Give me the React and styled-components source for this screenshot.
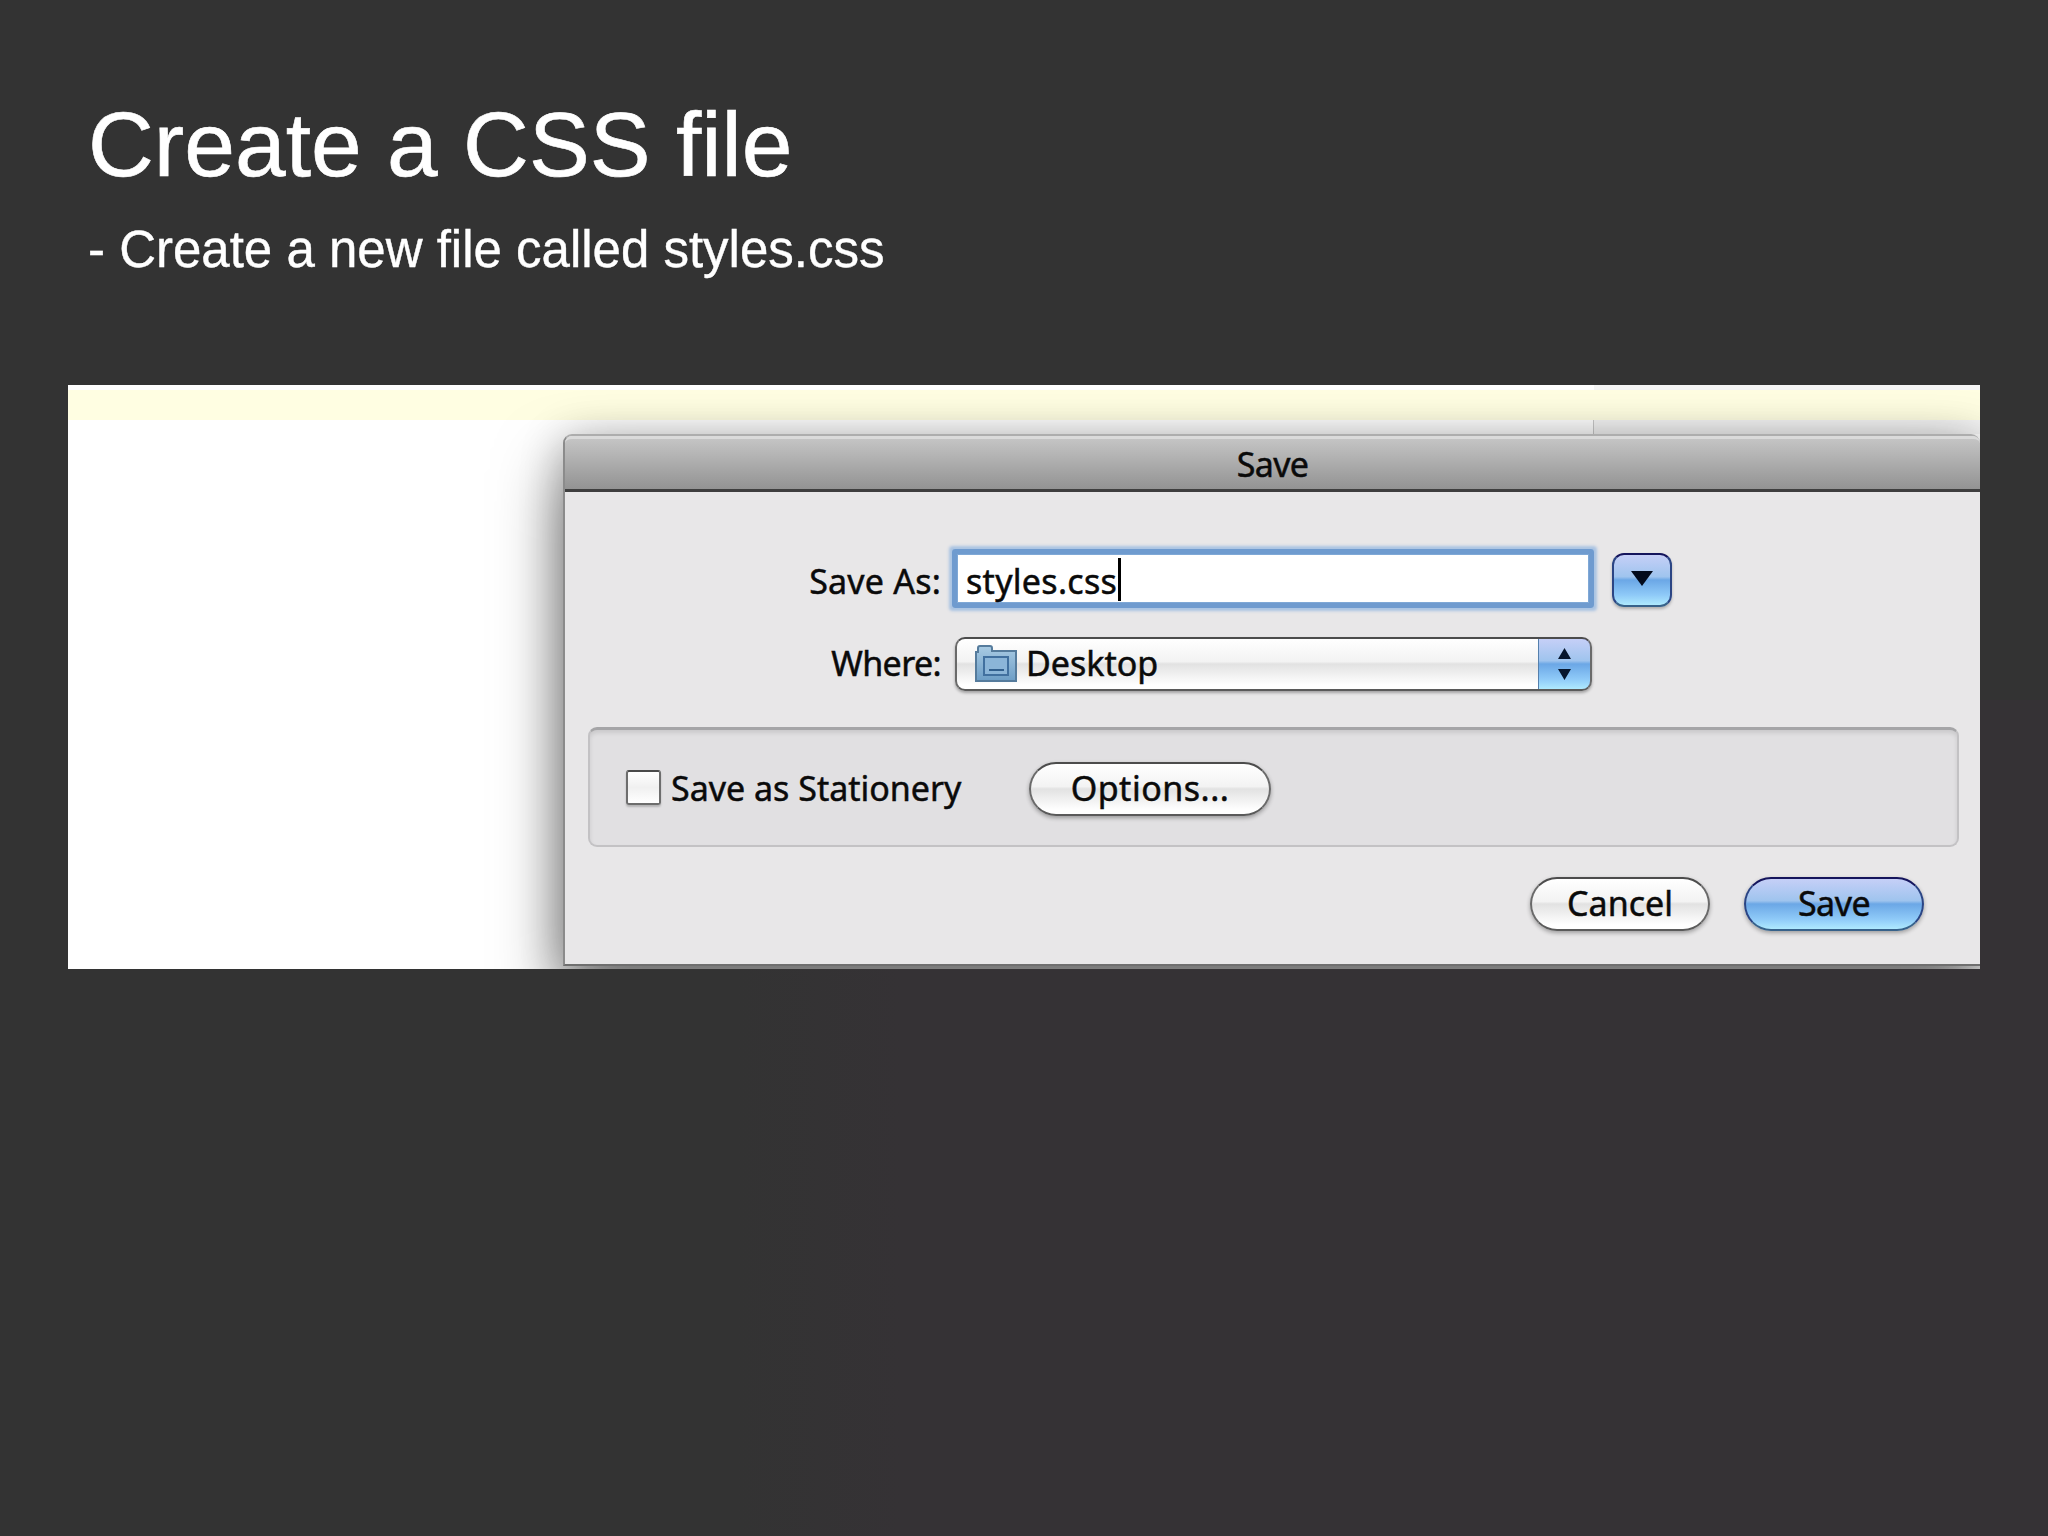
import styled, { createGlobalStyle, css } from 'styled-components'

const GlobalStyle = createGlobalStyle`
	* {
		box-sizing: border-box;
	}

	body {
		margin: 0;
		background: #333333;
	}
`

const Slide = styled.main`
	width: 2048px;
	height: 1536px;
	overflow: hidden;
	padding: 91px 68px 0;
	background:
		linear-gradient(90deg, #333333 36%, #353235 44%) 0 700px / 100% 836px no-repeat,
		#333333;
	color: #ffffff;
	font-family: 'Liberation Sans', Arial, sans-serif;
`

const Title = styled.h1`
	margin: 0;
	padding-left: 20px;
	font-size: 91.2px;
	font-weight: normal;
	line-height: 106px;
	white-space: nowrap;
	-webkit-text-stroke: 0.6px #ffffff;
`

const Subtitle = styled.p`
	margin: 24px 0 0;
	padding-left: 20px;
	font-size: 51px;
	line-height: 58px;
	white-space: nowrap;
	-webkit-text-stroke: 0.4px #ffffff;
`

const Capture = styled.section`
	width: 1912px;
	height: 584px;
	margin-top: 106px;
	padding: 49px 0 0 495px;
	overflow: hidden;
	background:
		linear-gradient(#c9c9c9, #c9c9c9) 1525px 35px / 1px 14px no-repeat,
		linear-gradient(#fffee2, #fffee2) 0 5px / 100% 30px no-repeat,
		linear-gradient(#f5f5f5, #f5f5f5) 1526px 0 / 386px 49px no-repeat,
		#ffffff;
	color: #0a0a0a;
	font-family: 'Noto Sans', 'Open Sans', sans-serif;
	font-size: 34px;
`

const Dialog = styled.div`
	width: 1417px;
	height: 532px;
	border: 2px solid #8b8b8b;
	border-width: 2px 0 2px 2px;
	border-top-color: #adadad;
	border-bottom-color: #6f6f6f;
	border-radius: 9px 9px 0 0;
	background: #e8e7e8;
	box-shadow:
		0 34px 66px rgba(0, 0, 0, 0.52),
		0 4px 44px rgba(0, 0, 0, 0.24);
`

const TitleBar = styled.header`
	display: flex;
	justify-content: center;
	height: 56px;
	border-top: 3px solid #dadada;
	border-bottom: 3px solid #3e3e3e;
	border-radius: 7px 7px 0 0;
	background: linear-gradient(#c4c4c4, #939393);
	line-height: 51px;
`

const Text = styled.span`
	white-space: nowrap;
	letter-spacing: ${({ $spacing }) => $spacing || 0}px;
	-webkit-text-stroke: 0.5px #0a0a0a;
`

const Form = styled.div`
	display: grid;
	grid-template-columns: 390px 637px 60px;
	grid-template-rows: 54px 54px;
	row-gap: 30px;
	padding-top: 61px;
`

const Label = styled.label`
	padding-right: 14px;
	line-height: ${({ $line }) => $line}px;
	text-align: right;
`

const Field = styled.div`
	display: flex;
	align-items: center;
	width: 632px;
	height: 49px;
	margin: 1px 0 0 2px;
	padding-left: 8px;
	border: 1px solid #7fa8d6;
	border-radius: 1px;
	background: #ffffff;
	box-shadow:
		0 0 0 5px #6f9bcf,
		0 0 3px 8px #a9c3e2;

	span {
		padding-top: 5px;
	}
`

const Caret = styled.i`
	width: 3px;
	height: 43px;
	margin: 2px 0 0 1px;
	background: #000000;
`

const white = css`
	border-color: #4c4c4c #6a6a6a #5a5a5a;
	background: linear-gradient(#ffffff, #f3f3f3 45%, #e2e2e2 50%, #ffffff 92%);
`

const blue = css`
	border-color: #15155c #2b4584 #37628a;
	background: linear-gradient(#c9d0f8, #9fc4ee 44%, #6ba7e6 50%, #8fcaf8 78%, #b5f0ff) border-box;
`

const Popup = styled.div`
	display: flex;
	align-items: center;
	height: 54px;
	padding: 0 0 0 18px;
	border: 2px solid;
	border-radius: 10px;
	overflow: hidden;
	box-shadow: 0 2px 3px rgba(0, 0, 0, 0.3);
	${white}

	span {
		padding: 0 0 2px 9px;
	}
`

const Stepper = styled.div`
	display: flex;
	align-items: center;
	justify-content: center;
	width: 54px;
	height: 54px;
	margin: 0 -2px 0 auto;
	border: 2px solid;
	border-radius: 0 10px 10px 0;
	${blue}
	border-left: 1px solid #5580ad;
`

const Expand = styled.button`
	display: flex;
	align-items: center;
	justify-content: center;
	width: 60px;
	height: 54px;
	margin: 0 0 0 20px;
	padding: 0 0 3px;
	border: 2px solid;
	border-radius: 12px;
	box-shadow: 0 2px 3px rgba(0, 0, 0, 0.25);
	${blue}
`

const Accessory = styled.div`
	display: flex;
	align-items: center;
	width: 1371px;
	height: 120px;
	margin: 36px 0 0 23px;
	padding: 2px 0 0 36px;
	border: 2px solid #c3c2c4;
	border-top: 3px solid #a5a5a7;
	border-radius: 9px;
	background: #e1e0e2;
	box-shadow: inset 0 3px 4px rgba(0, 0, 0, 0.1);
`

const Checkbox = styled.i`
	width: 35px;
	height: 35px;
	margin: 0 10px 3px 0;
	border: 2px solid #6d6d6d;
	border-top-color: #4a4a4a;
	border-radius: 3px;
	background: linear-gradient(#ffffff, #f0f0f0 50%, #ffffff);
	box-shadow: 0 2px 2px rgba(0, 0, 0, 0.2);
`

const CheckLabel = styled.label`
	display: flex;
	align-items: center;
	width: 403px;

	span {
		padding-bottom: 2px;
	}
`

const Button = styled.button`
	width: ${({ $width }) => $width}px;
	height: 54px;
	padding: 0 0 2px;
	border: 2px solid;
	border-radius: 27px;
	box-shadow: 0 2px 4px rgba(0, 0, 0, 0.32);
	color: #0a0a0a;
	font: inherit;
	line-height: 48px;
	${({ $primary }) => ($primary ? blue : white)}
`

const Actions = styled.footer`
	display: flex;
	justify-content: flex-end;
	gap: 34px;
	padding: 30px 56px 0 0;
`

function FolderIcon() {
	return (
		<svg width='42' height='38' viewBox='0 0 42 38'>
			<defs>
				<linearGradient id='folder' x1='0' y1='0' x2='0' y2='1'>
					<stop offset='0' stopColor='#a9cbe3' />
					<stop offset='1' stopColor='#6c9dc6' />
				</linearGradient>
			</defs>
			<path d='M3 7V3q0-2 2-2h10q2 0 2 2v3h24v30H1V7z' fill='url(#folder)' stroke='#557b9c' strokeWidth='2' />
			<rect x='9' y='12' width='24' height='18' fill='#8bb5d8' stroke='#41709f' strokeWidth='2' />
			<path d='M14 25h15' stroke='#315f8d' strokeWidth='2' />
		</svg>
	)
}

export default function App() {
	return (
		<Slide>
			<GlobalStyle />
			<Title>Create a CSS file</Title>
			<Subtitle>- Create a new file called styles.css</Subtitle>
			<Capture>
				<Dialog>
					<TitleBar>
						<Text $spacing={-0.7}>Save</Text>
					</TitleBar>
					<Form>
						<Label $line={57}>
							<Text $spacing={0.2}>Save As:</Text>
						</Label>
						<Field>
							<Text $spacing={0.3}>styles.css</Text>
							<Caret />
						</Field>
						<Expand>
							<svg width='22' height='15' viewBox='0 0 22 15'>
								<path d='M0 0h22L11 15z' fill='#030b1c' />
							</svg>
						</Expand>
						<Label $line={52}>
							<Text $spacing={-0.6}>Where:</Text>
						</Label>
						<Popup>
							<FolderIcon />
							<Text>Desktop</Text>
							<Stepper>
								<svg width='13' height='32' viewBox='0 0 13 32'>
									<path d='M0 11h13L6.5 0zM0 21h13L6.5 32z' fill='#07162e' />
								</svg>
							</Stepper>
						</Popup>
					</Form>
					<Accessory>
						<CheckLabel>
							<Checkbox />
							<Text>Save as Stationery</Text>
						</CheckLabel>
						<Button $width={242}>
							<Text $spacing={0.5}>Options...</Text>
						</Button>
					</Accessory>
					<Actions>
						<Button $width={180}>
							<Text>Cancel</Text>
						</Button>
						<Button $width={180} $primary>
							<Text $spacing={-0.5}>Save</Text>
						</Button>
					</Actions>
				</Dialog>
			</Capture>
		</Slide>
	)
}
